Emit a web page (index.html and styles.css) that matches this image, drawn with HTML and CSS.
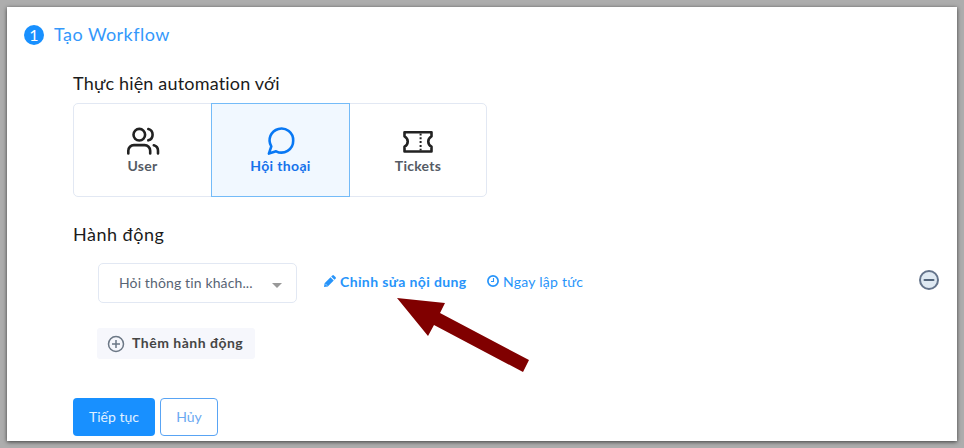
FILE: index.html
```html
<!DOCTYPE html>
<html lang="vi">
<head>
<meta charset="utf-8">
<title>Tạo Workflow</title>
<link rel="stylesheet" href="styles.css">
</head>
<body>
<main class="panel">
  <header class="step"><span class="step-number">1</span><h1 class="step-title">Tạo Workflow</h1></header>
  <div class="content">
    <h2 class="heading heading-target">Thực hiện automation với</h2>
    <div class="targets">
      <button class="target">
        <svg class="target-icon" viewBox="0 0 34 34" fill="none" stroke="currentColor" stroke-width="2.6" stroke-linecap="round" stroke-linejoin="round"><circle cx="13.3" cy="9.7" r="5.8"/><path d="M2.3 28.5v-2.8a5.6 5.6 0 0 1 5.6-5.6h10.7a5.6 5.6 0 0 1 5.6 5.6v2.8M22.3 4.1a5.8 5.8 0 0 1 0 11.2M32 28.5v-2.8a5.6 5.6 0 0 0-4.2-5.4"/></svg>
        <span class="label-user">User</span>
      </button>
      <button class="target target-active">
        <svg class="target-icon" viewBox="0 0 34 34" fill="none" stroke="currentColor" stroke-width="2.6" stroke-linejoin="round"><path d="M29.2 15.7a11.8 11.8 0 0 1-17.1 10.6L4.900 28.600l2.400-7.200A11.800 11.800 0 1 1 29.200 15.700z"/></svg>
        <span class="label-chat">Hội thoại</span>
      </button>
      <button class="target">
        <svg class="target-icon" viewBox="0 0 34 34" fill="none" stroke="currentColor" stroke-width="2.6" stroke-linejoin="round"><path d="M3.500 7.200h27v4.100c-4.300 2.300-4.300 8.100 0 10.400v4.800h-27v-4.800c4.300-2.300 4.300-8.100 0-10.400z"/><path d="M19.600 8.500v17" stroke-width="2" stroke-dasharray="2 1.800"/></svg>
        <span class="label-ticket">Tickets</span>
      </button>
    </div>
    <h2 class="heading heading-action">Hành động</h2>
    <div class="action-row">
      <button class="select"><span class="select-text">Hỏi thông tin khách...</span><i class="caret"></i></button>
      <a class="link edit"><svg class="link-icon" viewBox="0 0 12 12"><path fill="currentColor" d="M0 12l.6-3.800L6.500 2.300 9.700 5.500 3.800 11.400zM7.200 1.600 8.300.5q.8-.8 1.600 0l1.600 1.600q.8.8 0 1.600l-1.100 1.100z"/><path d="M1.300 8.800l1.900 1.900" stroke="#fff" stroke-width=".6"/></svg><span class="edit-text">Chỉnh sửa nội dung</span></a>
      <a class="link timing"><svg class="link-icon clock" viewBox="0 0 12 12" fill="none" stroke="currentColor"><circle cx="6" cy="6" r="5.100" stroke-width="1.700"/><path d="M6.500 3v3.500H4" stroke-width="1.100"/></svg><span class="timing-text">Ngay lập tức</span></a>
      <svg class="remove" viewBox="0 0 22 22"><circle cx="11" cy="11" r="9" fill="#dfe9f2" stroke="#64748b" stroke-width="2"/><path d="M6.500 11h9" stroke="#52647a" stroke-width="2" stroke-linecap="round"/></svg>
      <svg class="pointer" viewBox="0 0 134 75"><path fill="#800000" d="M1 0 49 5 44 15 133 62 127 74 38 27 32 38z"/></svg>
    </div>
    <button class="add"><svg class="add-icon" viewBox="0 0 18 18" fill="none" stroke="#6b7785" stroke-width="1.500"><circle cx="9" cy="9" r="7.500"/><path d="M9 5v8M5 9h8"/></svg><span class="add-text">Thêm hành động</span></button>
    <footer class="buttons"><button class="primary">Tiếp tục</button><button class="secondary">Hủy</button></footer>
  </div>
</main>
</body>
</html>
```
FILE: styles.css
```css
* { box-sizing: border-box; }
body { margin: 0; height: 448px; padding: 7px; overflow: hidden; background: #adadad; font-family: Lato, "Open Sans", sans-serif; font-size: 14px; white-space: nowrap; }
button { margin: 0; padding: 0; border: 0; background: none; font: inherit; }
h1, h2 { margin: 0; font-weight: 400; }
svg { display: block; flex: none; }
.panel { height: 434px; background: #fff; box-shadow: 0 1px 4px rgba(0,0,0,.65); padding: 17px 17px 0; }
.step { display: flex; align-items: center; height: 22px; color: #3498fb; }
.step-number { width: 20px; height: 20px; border-radius: 50%; background: #1890ff; color: #fff; text-align: center; line-height: 20px; font-size: 16px; }
.step-title { margin: -2px 0 0 10px; font-size: 18px; letter-spacing: .45px; }
.content { padding-left: 49px; }
.heading { color: #1b1b1b; font-size: 18px; line-height: 24px; }
.heading-target { margin-top: 25px; letter-spacing: .18px; }
.targets { display: grid; grid-template-columns: 137px 139px 136px; width: 414px; height: 94px; margin-top: 8px; border: 1px solid #e2e8f3; border-radius: 5px; }
.target { display: flex; flex-direction: column; align-items: center; padding-top: 21px; color: #555b65; font-weight: 700; line-height: 18px; }
.target-icon { width: 34px; height: 34px; color: #222; margin-bottom: -2px; }
.target-active { margin: -1px 0; border: 1px solid #74bbf8; background: #f1f8ff; color: #1672eb; }
.target-active .target-icon { color: #0878f4; }
.label-user { letter-spacing: .3px; }
.label-chat { letter-spacing: .35px; }
.label-ticket { letter-spacing: .25px; }
.heading-action { margin-top: 25px; letter-spacing: .5px; }
.action-row { position: relative; display: flex; height: 40px; align-items: center; margin: 17px -10px 0 24px; }
.select { display: flex; align-items: center; width: 199px; height: 40px; margin-left: 1px; padding: 0 14px 0 20px; border: 1px solid #e2e8f3; border-radius: 5px; color: #586474; }
.select-text { flex: 1; margin-top: -2px; text-align: left; letter-spacing: .13px; }
.caret { border: 5px solid transparent; border-top-color: #999; border-bottom: 0; margin-top: 4px; }
.link { display: flex; align-items: center; color: #2794fa; margin-top: -4px; }
.link-icon { width: 12px; height: 12px; margin-right: 4px; }
.edit { width: 163px; margin-left: 27px; font-weight: 700; letter-spacing: .38px; }
.timing { letter-spacing: .25px; }
.remove { width: 22px; height: 22px; margin: -6px 10px 0 auto; }
.pointer { position: absolute; left: 299px; top: 35px; width: 134px; height: 75px; }
.add { display: flex; align-items: center; width: 158px; height: 31px; margin: 25px 0 0 24px; padding-left: 10px; border-radius: 3px; background: #f6f7fc; color: #454545; font-weight: 700; }
.add-icon { width: 18px; height: 18px; margin-right: 7px; }
.add-text { margin-top: -3px; letter-spacing: .5px; }
.buttons { display: flex; gap: 5px; margin-top: 39px; }
.primary, .secondary { height: 38px; padding-bottom: 2px; border-radius: 4px; }
.primary { width: 82px; background: #1890ff; color: #e0f1ff; }
.secondary { width: 58px; border: 1px solid #59a4f4; color: #6ba9f1; }
```
